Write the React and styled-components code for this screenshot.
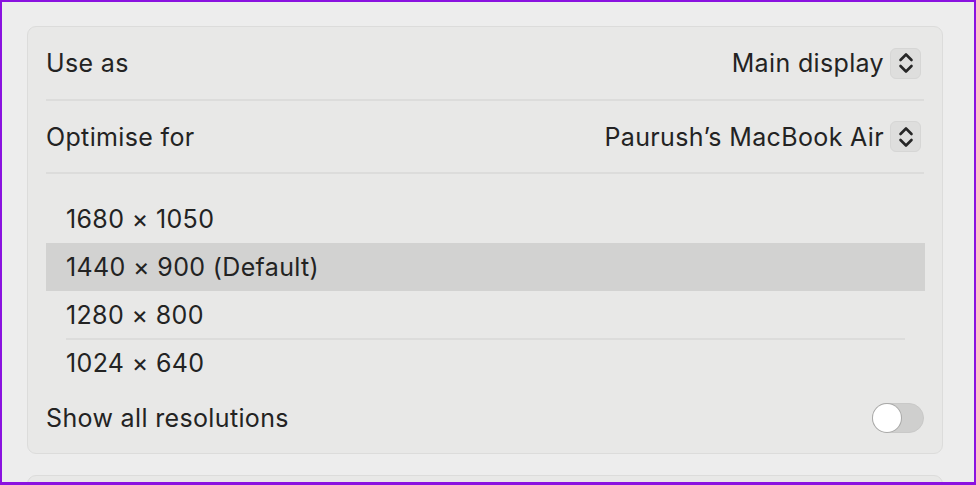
import React, { useState } from 'react';
import styled, { createGlobalStyle } from 'styled-components';

const GlobalStyle = createGlobalStyle`
  html, body {
    margin: 0;
    padding: 0;
    background: #8a12e0;
  }
  body {
    font-family: Inter, "Noto Sans", sans-serif;
    -webkit-font-smoothing: antialiased;
  }
`;

const Frame = styled.div`
  box-sizing: border-box;
  width: 976px;
  height: 485px;
  margin: 0;
  border: 2px solid #8a12e0;
  border-bottom-width: 3px;
  background: #ededed;
  overflow: hidden;
  padding: 24px 31px 0 25px;
  display: flex;
  flex-direction: column;
  gap: 21px;
`;

const Card = styled.div`
  box-sizing: border-box;
  background: #e8e8e7;
  border: 1px solid #dcdcdb;
  border-radius: 9px;
  padding: 0 18px 0 18px;
  display: flex;
  flex-direction: column;
  flex-shrink: 0;
`;

const Row = styled.div`
  display: flex;
  align-items: center;
  justify-content: space-between;
  height: ${p => p.$h || 72}px;
  border-bottom: ${p => (p.$divider ? '2px solid #dcdcdb' : 'none')};
  padding-right: 3px;
  box-sizing: border-box;
`;

const Label = styled.span`
  font-size: 25px;
  color: #232323;
  letter-spacing: 0.35px;
`;

const PopupWrap = styled.div`
  display: flex;
  align-items: center;
  gap: 6px;
`;

const StepperBox = styled.div`
  width: 31px;
  height: 31px;
  box-sizing: border-box;
  border-radius: 6px;
  background: #dededd;
  border: 1px solid #d6d6d5;
  display: flex;
  align-items: center;
  justify-content: center;
`;

const List = styled.div`
  display: flex;
  flex-direction: column;
  padding: 21px 0 0;
  margin-right: -1px;
`;

const Item = styled.div`
  height: 48px;
  display: flex;
  align-items: center;
  padding-left: 20px;
  font-size: 25px;
  letter-spacing: 0.35px;
  color: #232323;
  background: ${p => (p.$selected ? '#d2d2d1' : 'transparent')};
`;

const ItemDivider = styled.div`
  height: 2px;
  background: #dcdcdb;
  margin: -1px 20px -1px 20px;
`;

const Toggle = styled.button`
  width: 52px;
  height: 30px;
  border-radius: 15px;
  border: 1px solid #c9c9c8;
  background: #cfcfce;
  padding: 0;
  position: relative;
  cursor: pointer;
  margin-right: -3px;
  box-sizing: border-box;
`;

const Knob = styled.span`
  position: absolute;
  top: 0px;
  left: ${p => (p.$on ? '23px' : '0px')};
  width: 28px;
  height: 28px;
  border-radius: 50%;
  background: #ffffff;
  box-shadow: 0 0 0 1px #a9a9a8;
`;

const Chevrons = () => (
  <svg width="18" height="26" viewBox="0 0 18 26" fill="none">
    <path d="M3.5 10 L9 4.5 L14.5 10" stroke="#262626" strokeWidth="2.6" strokeLinecap="round" strokeLinejoin="round" />
    <path d="M3.5 16 L9 21.5 L14.5 16" stroke="#262626" strokeWidth="2.6" strokeLinecap="round" strokeLinejoin="round" />
  </svg>
);

const Popup = ({ value }) => (
  <PopupWrap>
    <Label>{value}</Label>
    <StepperBox>
      <Chevrons />
    </StepperBox>
  </PopupWrap>
);

const resolutions = ['1680 × 1050', '1440 × 900 (Default)', '1280 × 800', '1024 × 640'];

export default function App() {
  const [selected, setSelected] = useState(1);
  const [showAll, setShowAll] = useState(false);
  return (
    <>
      <GlobalStyle />
      <Frame>
        <Card style={{ height: 428 }}>
          <Row $divider $h={74}>
            <Label>Use as</Label>
            <Popup value="Main display" />
          </Row>
          <Row $divider $h={73}>
            <Label>Optimise for</Label>
            <Popup value="Paurush’s MacBook Air" />
          </Row>
          <List>
            {resolutions.map((r, i) => (
              <React.Fragment key={r}>
                {i === 3 && <ItemDivider />}
                <Item $selected={selected === i} onClick={() => setSelected(i)}>
                  {r}
                </Item>
              </React.Fragment>
            ))}
          </List>
          <Row $h={62}>
            <Label>Show all resolutions</Label>
            <Toggle onClick={() => setShowAll(!showAll)}>
              <Knob $on={showAll} />
            </Toggle>
          </Row>
        </Card>
        <Card style={{ height: 60 }} />
      </Frame>
    </>
  );
}
